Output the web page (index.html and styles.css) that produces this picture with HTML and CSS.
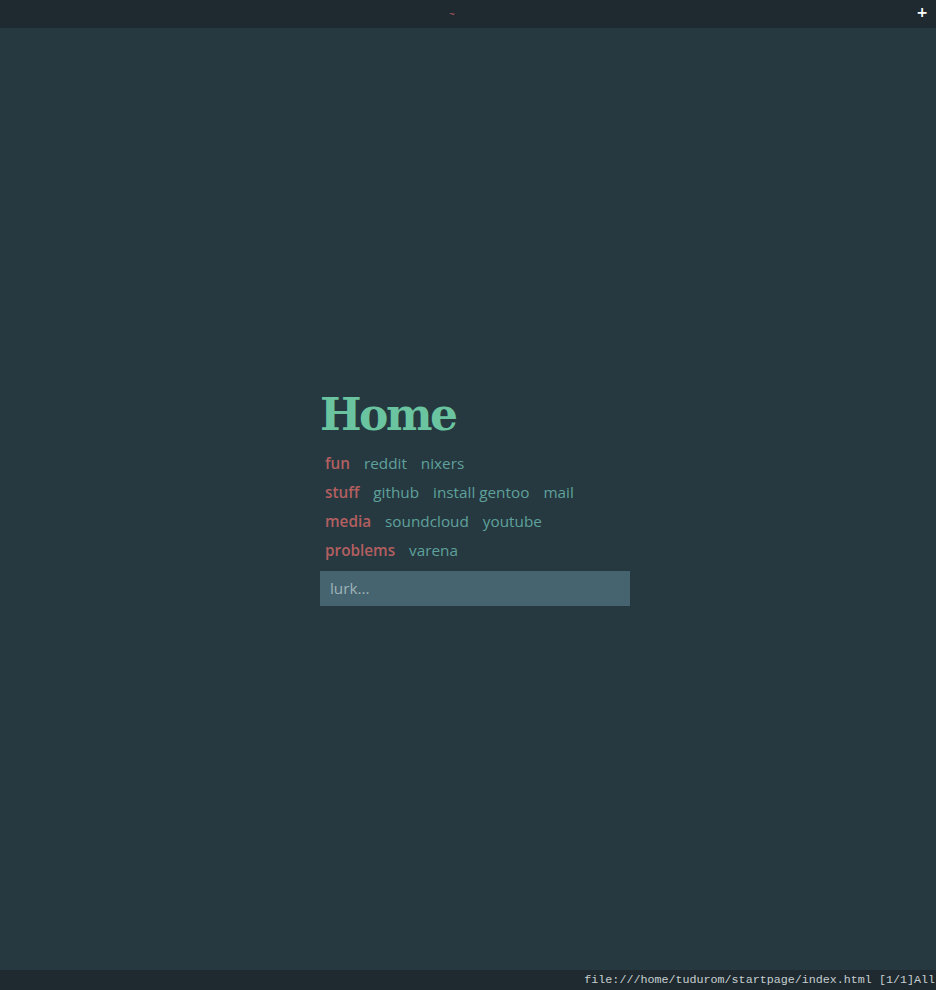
FILE: index.html
```html
<!DOCTYPE html>
<html>
<head>
<meta charset="utf-8">
<link rel="stylesheet" href="styles.css">
</head>
<body>
<div class="tabbar">
  <span class="tab-title">~</span>
  <span class="tab-add">+</span>
</div>
<main class="main">
  <div class="card">
    <h1 class="title">Home</h1>
    <ul class="groups">
      <li class="group"><span class="cat">fun</span><a class="link">reddit</a><a class="link">nixers</a></li>
      <li class="group"><span class="cat">stuff</span><a class="link">github</a><a class="link">install gentoo</a><a class="link">mail</a></li>
      <li class="group"><span class="cat">media</span><a class="link">soundcloud</a><a class="link">youtube</a></li>
      <li class="group"><span class="cat">problems</span><a class="link">varena</a></li>
    </ul>
    <input class="search" type="text" placeholder="lurk...">
  </div>
</main>
<div class="statusbar">
  <span class="status">file:///home/tudurom/startpage/index.html [1/1]All</span>
</div>
</body>
</html>
```

FILE: styles.css
```css
html, body {
  margin: 0;
  padding: 0;
  height: 100%;
}
body {
  background: #263940;
  display: flex;
  flex-direction: column;
  font-family: "Open Sans", sans-serif;
}
.tabbar {
  height: 28px;
  flex: none;
  background: #1e2a30;
  display: flex;
  align-items: center;
  justify-content: center;
  position: relative;
}
.tab-title {
  color: #c0625f;
  font-family: "DejaVu Sans Mono", monospace;
  font-size: 9px;
  margin-right: 32px;
}
.tab-add {
  position: absolute;
  right: 8px;
  top: 4px;
  color: #ffffff;
  font-family: "DejaVu Sans", sans-serif;
  font-size: 14px;
  font-weight: bold;
}
.main {
  flex: 1;
  display: flex;
  align-items: center;
  justify-content: center;
  padding-left: 14px;
  padding-bottom: 4px;
}
.card {
  width: 310px;
  display: flex;
  flex-direction: column;
}
.title {
  margin: 0 0 8px 0;
  font-family: "DejaVu Serif", serif;
  font-weight: bold;
  font-size: 44px;
  letter-spacing: -2.5px;
  line-height: 52px;
  color: #6bc4a0;
}
.groups {
  list-style: none;
  margin: 0;
  padding: 0 0 0 5px;
  display: flex;
  flex-direction: column;
}
.group {
  display: flex;
  gap: 14px;
  height: 29px;
  align-items: center;
  font-size: 15.3px;
}
.cat {
  color: #b35f60;
  font-weight: 600;
}
.link {
  color: #5fa19c;
}
.search {
  margin-top: 6px;
  height: 35px;
  box-sizing: border-box;
  border: none;
  outline: none;
  background: #466470;
  padding: 0 10px;
  font-family: "Open Sans", sans-serif;
  font-size: 15.3px;
  color: #a9bcc2;
}
.search::placeholder {
  color: #9fb3b9;
}
.statusbar {
  height: 20px;
  flex: none;
  background: #1e2a30;
  display: flex;
  align-items: center;
  justify-content: flex-end;
}
.status {
  font-family: "Liberation Mono", monospace;
  font-size: 11.7px;
  color: #c8ced0;
  padding-right: 1px;
}
```
